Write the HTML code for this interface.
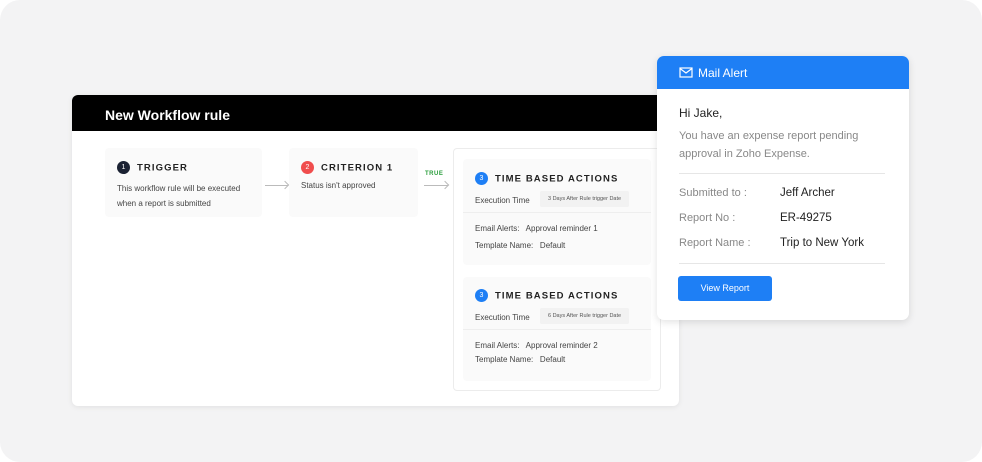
<!DOCTYPE html>
<html><head><style>
*{margin:0;padding:0;box-sizing:border-box}
body{width:982px;height:462px;background:#fff;font-family:"Liberation Sans",sans-serif;position:relative;overflow:hidden}
.bg{position:absolute;left:0;top:0;width:982px;height:462px;background:#f3f3f4;border-radius:20px}
.abs{position:absolute}
.main{left:72px;top:95px;width:607px;height:311px;background:#fff;border-radius:6px;box-shadow:0 1px 6px rgba(0,0,0,.08);overflow:hidden}
.hdr{left:0;top:0;width:607px;height:36px;background:#000;color:#fff;font-size:14px;font-weight:bold;padding:12px 0 0 33px}
.box{background:#fafafa;border-radius:4px}
.num{display:inline-block;width:13px;height:13px;border-radius:50%;color:#fff;font-size:7px;text-align:center;line-height:13px;vertical-align:middle;margin-right:7px}
.ttl{font-size:9.5px;font-weight:bold;letter-spacing:1.1px;color:#222;vertical-align:middle}
.t{font-size:8px;color:#444}
.arrow{height:1px;background:#bbb}
.arrow:after{content:"";position:absolute;right:0;top:-3px;width:5px;height:5px;border-top:1px solid #bbb;border-right:1px solid #bbb;transform:rotate(45deg)}
.pill{background:#f2f2f2;font-size:5.5px;color:#555;padding:5px 8px;border-radius:2px}
.mail{left:657px;top:56px;width:252px;height:264px;background:#fff;border-radius:7px;box-shadow:0 2px 8px rgba(0,0,0,.12);overflow:hidden}
.mh{left:0;top:0;width:252px;height:33px;background:#1e7ff5;color:#fff;font-size:12px;padding:10px 0 0 41px}
.g{color:#888;font-size:11px}
.k{color:#222;font-size:11.5px}
</style></head><body>
<div class="bg"></div>
<div class="abs main">
 <div class="abs hdr">New Workflow rule</div>
 <div class="abs box" style="left:33px;top:53px;width:157px;height:69px"></div>
 <div class="abs" style="left:45px;top:64px"><span class="num" style="background:#1b2233">1</span><span class="ttl">TRIGGER</span></div>
 <div class="abs t" style="left:45px;top:86px;line-height:15px">This workflow rule will be executed<br>when a report is submitted</div>
 <div class="abs arrow" style="left:193px;top:90px;width:23px"></div>
 <div class="abs box" style="left:217px;top:53px;width:129px;height:69px"></div>
 <div class="abs" style="left:229px;top:64px"><span class="num" style="background:#f04d4d">2</span><span class="ttl">CRITERION 1</span></div>
 <div class="abs t" style="left:229px;top:86px">Status isn't approved</div>
 <div class="abs" style="left:353px;top:76px;font-size:6px;font-weight:bold;color:#2a9d3c;letter-spacing:.5px">TRUE</div>
 <div class="abs arrow" style="left:352px;top:90px;width:24px"></div>
 <div class="abs" style="left:381px;top:53px;width:208px;height:243px;border:1px solid #ececec;border-radius:4px"></div>
 <div class="abs box" style="left:391px;top:64px;width:188px;height:106px"></div>
 <div class="abs" style="left:403px;top:75px"><span class="num" style="background:#1e7ff5">3</span><span class="ttl">TIME BASED ACTIONS</span></div>
 <div class="abs t" style="left:403px;top:101px">Execution Time</div>
 <div class="abs pill" style="left:468px;top:96px">3 Days After Rule trigger Date</div>
 <div class="abs" style="left:391px;top:117px;width:188px;height:1px;background:#eee"></div>
 <div class="abs t" style="left:403px;top:129px">Email Alerts:&nbsp;&nbsp; Approval reminder 1</div>
 <div class="abs t" style="left:403px;top:146px">Template Name:&nbsp;&nbsp; Default</div>
 <div class="abs box" style="left:391px;top:182px;width:188px;height:104px"></div>
 <div class="abs" style="left:403px;top:192px"><span class="num" style="background:#1e7ff5">3</span><span class="ttl">TIME BASED ACTIONS</span></div>
 <div class="abs t" style="left:403px;top:218px">Execution Time</div>
 <div class="abs pill" style="left:468px;top:213px">6 Days After Rule trigger Date</div>
 <div class="abs" style="left:391px;top:234px;width:188px;height:1px;background:#eee"></div>
 <div class="abs t" style="left:403px;top:246px">Email Alerts:&nbsp;&nbsp; Approval reminder 2</div>
 <div class="abs t" style="left:403px;top:260px">Template Name:&nbsp;&nbsp; Default</div>
</div>
<div class="abs mail">
 <div class="abs mh">Mail Alert</div>
 <svg class="abs" style="left:22px;top:11px" width="14" height="11" viewBox="0 0 14 11"><rect x="1" y="1" width="12" height="9" fill="none" stroke="#fff" stroke-width="1.2"/><path d="M1 1.5L7 6L13 1.5" fill="none" stroke="#fff" stroke-width="1.2"/></svg>
 <div class="abs k" style="left:22px;top:50px;font-size:12px">Hi Jake,</div>
 <div class="abs g" style="left:22px;top:71px;line-height:18px">You have an expense report pending<br>approval in Zoho Expense.</div>
 <div class="abs" style="left:22px;top:117px;width:206px;height:1px;background:#e6e6e6"></div>
 <div class="abs g" style="left:22px;top:131px">Submitted to :</div><div class="abs k" style="left:123px;top:131px">Jeff Archer</div>
 <div class="abs g" style="left:22px;top:156px">Report No :</div><div class="abs k" style="left:123px;top:156px">ER-49275</div>
 <div class="abs g" style="left:22px;top:181px">Report Name :</div><div class="abs k" style="left:123px;top:181px">Trip to New York</div>
 <div class="abs" style="left:22px;top:207px;width:206px;height:1px;background:#e6e6e6"></div>
 <div class="abs" style="left:21px;top:220px;width:94px;height:25px;background:#1e7ff5;border-radius:3px;color:#fff;font-size:9px;text-align:center;line-height:25px">View Report</div>
</div>
</body></html>
